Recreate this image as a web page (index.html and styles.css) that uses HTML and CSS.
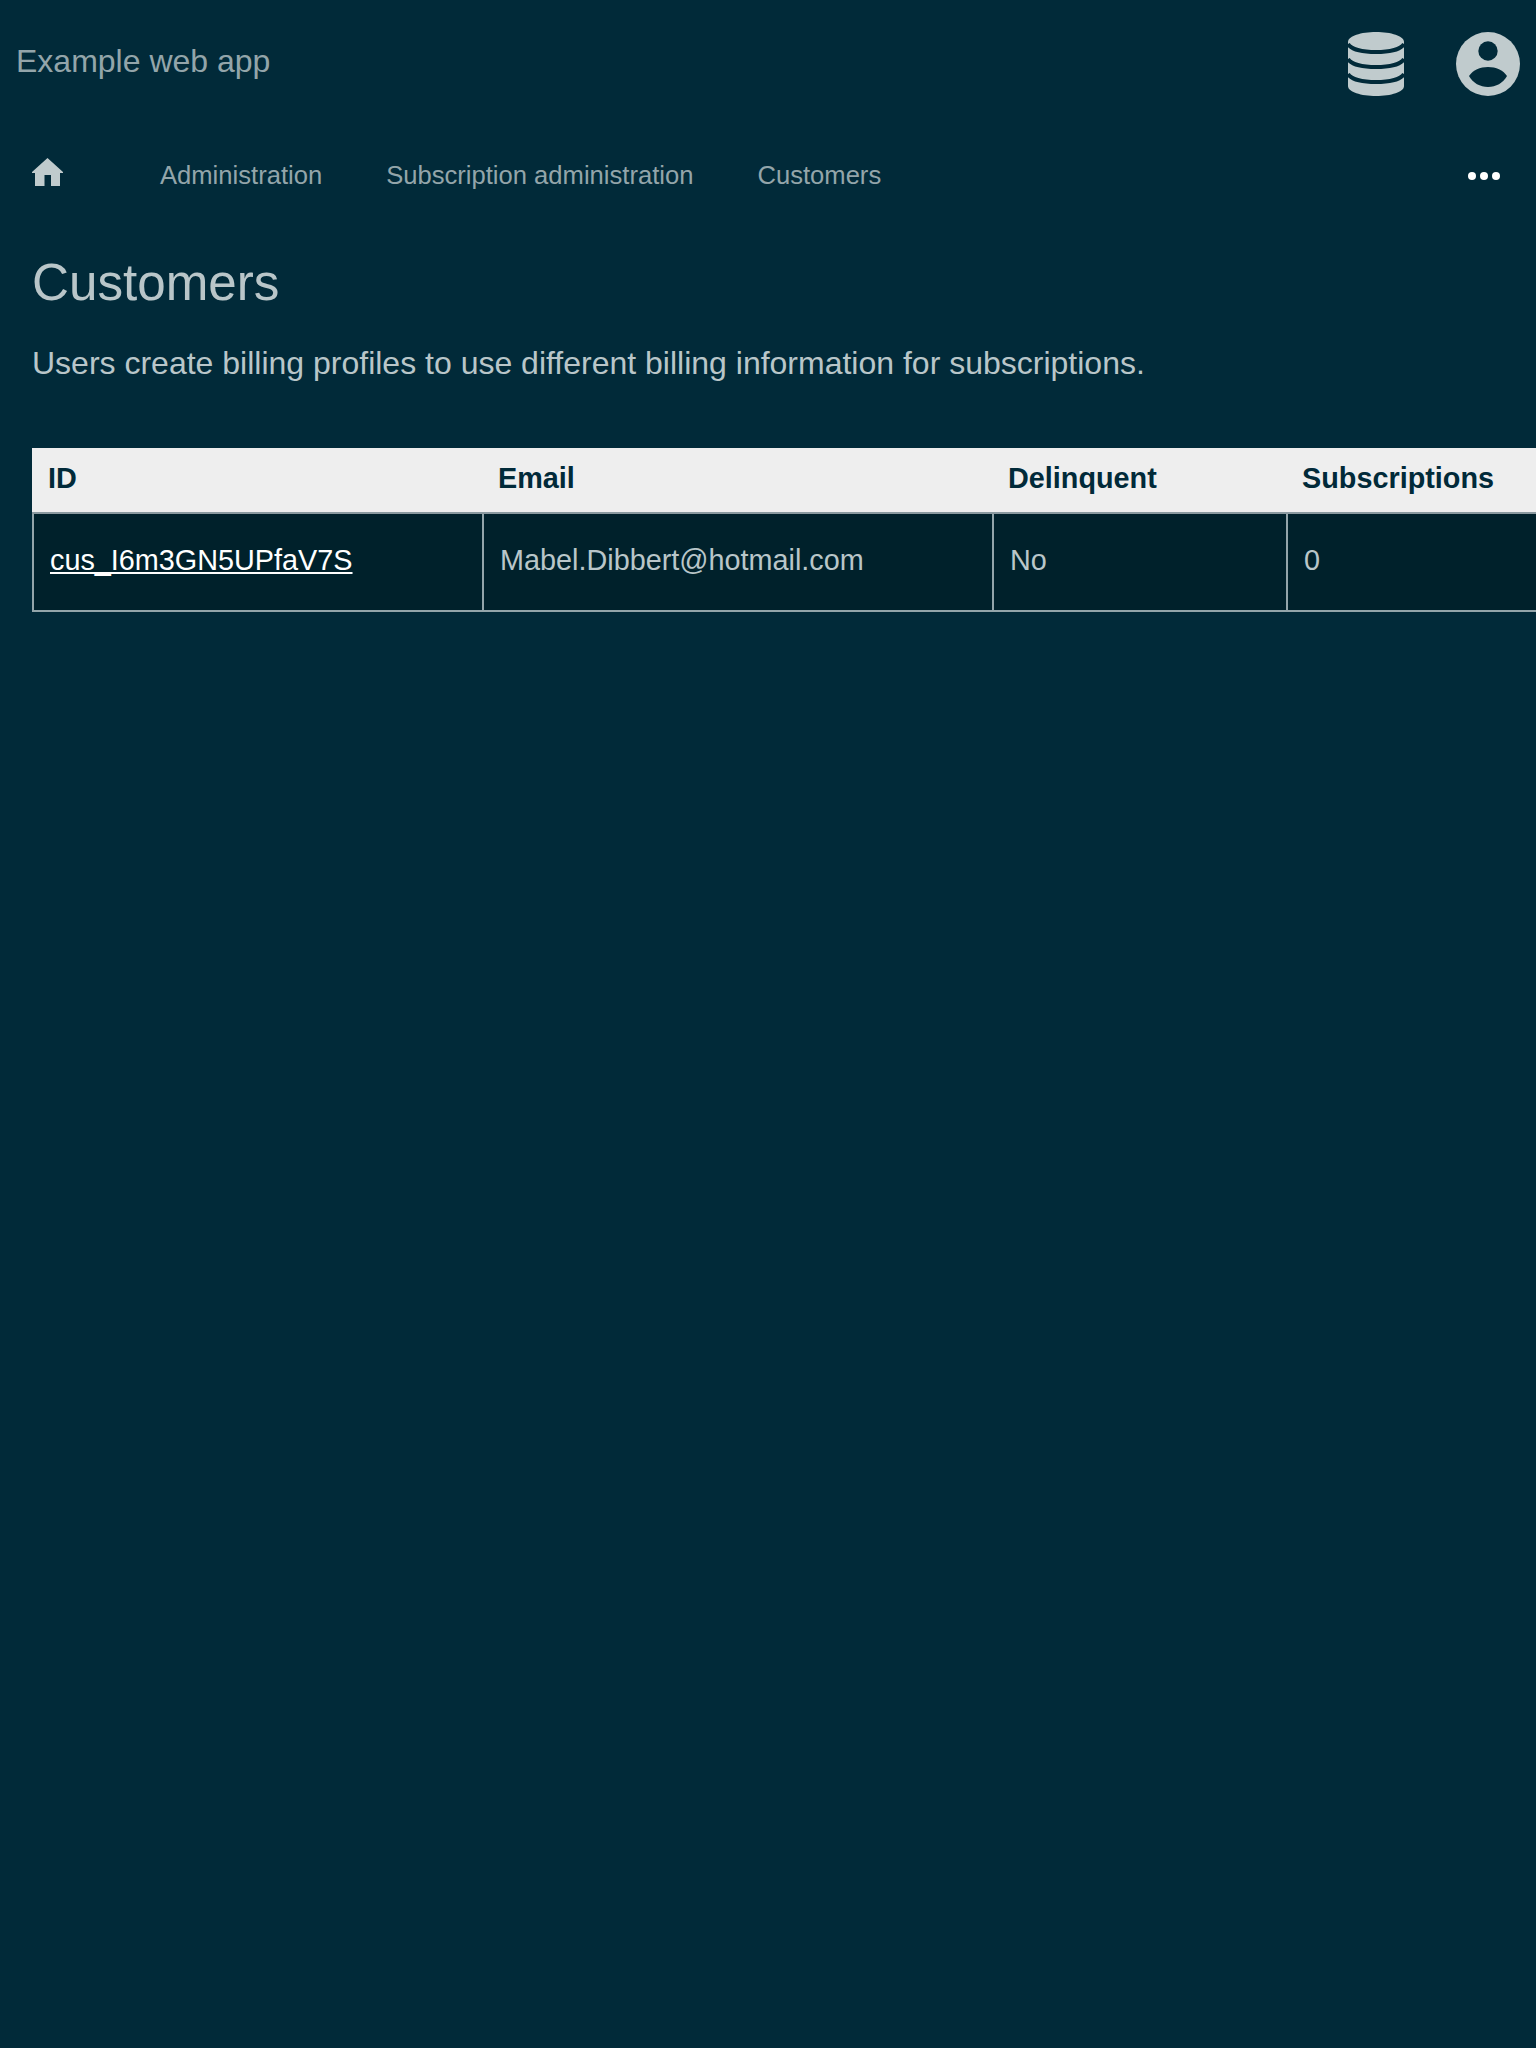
FILE: index.html
```html
<!DOCTYPE html>
<html>
<head>
	<title>Customers</title>
	<link rel="stylesheet" href="styles.css">
</head>
<body>
	<header class="top-bar">
		<span class="app-name">Example web app</span>
		<div class="top-icons">
			<svg class="db-icon" viewBox="0 0 56 64">
				<path class="icon-fill" d="M0 10C0 4 13 0 28 0s28 4 28 10v44c0 6-13 10-28 10S0 60 0 54z"/>
				<path class="icon-cut" d="M0 12c3 5 14 8 28 8s25-3 28-8M0 27c3 5 14 8 28 8s25-3 28-8M0 42c3 5 14 8 28 8s25-3 28-8"/>
			</svg>
			<svg class="user-icon" viewBox="0 0 64 64">
				<circle class="icon-fill" cx="32" cy="32" r="32"/>
				<circle class="icon-hole" cx="32" cy="19" r="9.7"/>
				<path class="icon-hole" d="M13 44c4-6 11-9 19-9s15 3 19 9c-4 7-11 11-19 11s-15-4-19-11z"/>
			</svg>
		</div>
	</header>

	<nav class="main-nav">
		<a href="#" class="home-link">
			<svg class="home-icon" viewBox="0 0 32 28">
				<path class="icon-fill" d="M15.500 0L31 14v1h-3v13H19V17h-6.500v11H3V15H0v-1z"/>
			</svg>
		</a>
		<a href="#">Administration</a>
		<a href="#">Subscription administration</a>
		<a href="#">Customers</a>
		<span class="more-dots"><i></i><i></i><i></i></span>
	</nav>

	<main class="content">
		<h1>Customers</h1>
		<p class="intro">Users create billing profiles to use different billing information for subscriptions.</p>
		<table>
			<thead>
				<tr>
					<th class="col-id">ID</th>
					<th class="col-email">Email</th>
					<th class="col-delinquent">Delinquent</th>
					<th>Subscriptions</th>
				</tr>
			</thead>
			<tbody>
				<tr>
					<td><a href="#">cus_I6m3GN5UPfaV7S</a></td>
					<td>Mabel.Dibbert@hotmail.com</td>
					<td>No</td>
					<td>0</td>
				</tr>
			</tbody>
		</table>
	</main>
</body>
</html>
```

FILE: styles.css
```css
html, body {
	margin: 0;
	height: 100%;
	overflow: hidden;
}
body {
	background: #012a39;
	color: #b9c6c9;
	font-family: "Liberation Sans", Arial, sans-serif;
}
svg {
	display: block;
}
.icon-fill {
	fill: #c0cbcd;
}
.icon-hole {
	fill: #012a39;
}
.icon-cut {
	fill: none;
	stroke: #012a39;
	stroke-width: 4;
}
.top-bar {
	display: flex;
	justify-content: space-between;
	align-items: center;
	height: 128px;
	padding: 0 16px;
}
.app-name {
	font-size: 32px;
	color: #93a5aa;
	margin-top: -6px;
}
.top-icons {
	display: flex;
	gap: 52px;
}
.db-icon {
	width: 56px;
	height: 64px;
}
.user-icon {
	width: 64px;
	height: 64px;
}
.main-nav {
	display: flex;
	align-items: center;
	height: 94px;
	padding: 0 32px;
	gap: 64px;
}
.main-nav a {
	font-size: 25.6px;
	color: #93a5aa;
	text-decoration: none;
}
.home-link {
	margin-right: 32px;
	margin-top: -6px;
}
.home-icon {
	width: 32px;
	height: 28px;
}
.more-dots {
	display: flex;
	gap: 4px;
	margin: 2px 4px 0 auto;
}
.more-dots i {
	width: 8px;
	height: 8px;
	border-radius: 50%;
	background: #fff;
}
.content {
	padding: 0 0 0 32px;
}
h1 {
	font-size: 51.2px;
	font-weight: normal;
	line-height: 60px;
	margin: 31px 0 0;
}
.intro {
	font-size: 32px;
	line-height: 40px;
	margin: 30px 0 65px;
}
table {
	border-collapse: separate;
	border-spacing: 0;
	table-layout: fixed;
	width: 1504px;
	font-size: 28.8px;
}
th, td {
	box-sizing: border-box;
}
th {
	background: #eee;
	color: #012a39;
	text-align: left;
	height: 66px;
	padding: 0 16px 3px;
	border-bottom: 2px solid #8a999f;
}
td {
	background: #00212b;
	height: 98px;
	padding: 0 16px 3px;
	border-left: 2px solid #93a5aa;
	border-bottom: 2px solid #93a5aa;
}
td a {
	color: #fff;
}
.col-id {
	width: 450px;
}
.col-email {
	width: 510px;
}
.col-delinquent {
	width: 294px;
}
```
